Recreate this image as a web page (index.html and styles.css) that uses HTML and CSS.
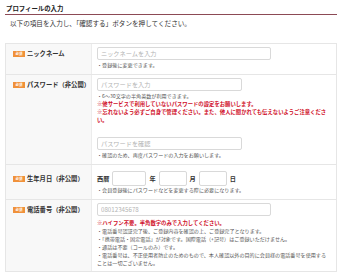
FILE: index.html
```html
<!DOCTYPE html>
<html>
<head>
	<title>プロフィールの入力</title>
	<meta charset="utf-8">
	<link rel="stylesheet" href="styles.css">
</head>
<body>

	<div class="page">
		<h2 class="heading">プロフィールの入力</h2>
		<p class="lead">以下の項目を入力し、「確認する」ボタンを押してください。</p>

		<div class="form-table">

			<div class="row row-nick">
				<div class="label"><span class="req">必須</span>ニックネーム</div>
				<div class="field">
					<input class="text text-wide" type="text" placeholder="ニックネームを入力">
					<p class="note">・登録後に変更できます。</p>
				</div>
			</div>

			<div class="row row-pass">
				<div class="label"><span class="req">必須</span>パスワード（非公開）</div>
				<div class="field">
					<input class="text text-mid" type="password" placeholder="パスワードを入力">
					<p class="note">・6〜30文字の半角英数が利用できます。</p>
					<p class="warn">※他サービスで利用していないパスワードの設定をお願いします。</p>
					<p class="warn">※忘れないよう必ずご自身で管理ください。また、他人に聞かれても伝えないようご注意ください。</p>
					<input class="text text-mid text-confirm" type="password" placeholder="パスワードを確認">
					<p class="note">・確認のため、再度パスワードの入力をお願いします。</p>
				</div>
			</div>

			<div class="row row-birth">
				<div class="label"><span class="req">必須</span>生年月日（非公開）</div>
				<div class="field">
					<div class="date">
						<span class="unit">西暦</span>
						<input class="text text-year" type="text">
						<span class="unit">年</span>
						<input class="text text-md" type="text">
						<span class="unit">月</span>
						<input class="text text-md" type="text">
						<span class="unit">日</span>
					</div>
					<p class="note">・会員登録後にパスワードなどを変更する際に必要になります。</p>
				</div>
			</div>

			<div class="row row-tel">
				<div class="label"><span class="req">必須</span>電話番号（非公開）</div>
				<div class="field">
					<input class="text text-wide" type="tel" placeholder="08012345678">
					<p class="warn">※ハイフン不要。半角数字のみで入力してください。</p>
					<p class="note">・電話番号認証完了後、ご登録内容を確認の上、ご登録完了となります。</p>
					<p class="note">・「携帯電話・固定電話」が対象です。国際電話（+記号）はご登録いただけません。</p>
					<p class="note">・通話は不要（コールのみ）です。</p>
					<p class="note">・電話番号は、不正使用者防止のためのもので、本人確認以外の目的に会員様の電話番号を使用することは一切ございません。</p>
				</div>
			</div>

		</div>
	</div>

</body>
</html>
```

FILE: styles.css
```css
*,
*:before,
*:after {
	box-sizing: border-box;
}

body {
	margin: 0;
	background-color: #ffffff;
	color: #333333;
	font-family: "Noto Sans CJK JP", "Noto Sans", sans-serif;
}

.page {
	padding: 0 3px 0 5px;
}

.heading {
	margin: 0;
	padding: 4px 1px 1px;
	border-bottom: 1px solid #8c4a55;
	font-size: 6.4px;
	line-height: 9px;
	font-weight: bold;
	color: #222222;
}

.lead {
	margin: 4px 0 0 5px;
	font-size: 6.6px;
	line-height: 9px;
}

.form-table {
	margin-top: 15px;
	border: 1px solid #e6e6e6;
	border-top: 0;
}

.row {
	display: grid;
	grid-template-columns: 86px 1fr;
	border-top: 1px solid #e6e6e6;
}

.label {
	display: flex;
	align-items: flex-start;
	padding: 5px 0 0 7px;
	background-color: #f8f8f8;
	border-right: 1px solid #ececec;
	font-size: 6.3px;
	line-height: 9px;
	font-weight: bold;
	color: #333333;
}

.req {
	display: inline-block;
	margin: 1.5px 2px 0 0;
	padding: 0 2px;
	background-color: #f0913a;
	color: #ffffff;
	font-size: 3.5px;
	line-height: 6px;
	height: 6px;
	width: 12px;
	text-align: center;
}

.field {
	padding: 3px 6px 5px 5px;
}

.text {
	display: block;
	height: 13px;
	padding: 0 3px;
	border: 1px solid #d9d9d9;
	border-radius: 2px;
	background-color: #ffffff;
	font-family: inherit;
	font-size: 6.2px;
	color: #333333;
}

.text::placeholder {
	color: #b3b3b3;
}

.text-wide {
	width: 174px;
}

.text-mid {
	width: 145px;
}

.text-confirm {
	margin-top: 13px;
}

.note {
	margin: 0;
	font-size: 5.1px;
	line-height: 8px;
	color: #555555;
}

.text + .note {
	margin-top: 1px;
}

.warn {
	margin: 0;
	font-size: 5.35px;
	line-height: 8px;
	font-weight: bold;
	color: #d0102a;
}

.text + .warn {
	margin-top: 3px;
}

.row-birth .label {
	padding-top: 9px;
}

.date {
	display: flex;
	align-items: center;
	gap: 3px;
	margin-top: 3px;
}

.unit {
	font-size: 6.2px;
	font-weight: bold;
	color: #333333;
}

.text-year {
	width: 34px;
	height: 15px;
}

.text-md {
	width: 28px;
	height: 15px;
}

.row-tel .field {
	padding-bottom: 4px;
}
```
